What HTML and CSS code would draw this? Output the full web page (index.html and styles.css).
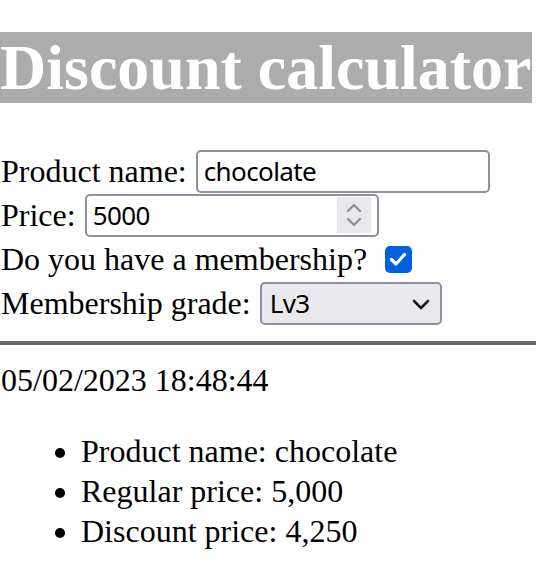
FILE: index.html
```html
<!DOCTYPE html>
<html lang="en">
<head>
<meta charset="utf-8">
<title>Discount calculator</title>
<link rel="stylesheet" href="styles.css">
</head>
<body>
<h1 class="title"><span class="title-text">Discount calculator</span></h1>
<form class="form">
  <div class="row">
    <label class="label" for="name">Product name:</label>
    <input class="text-input" id="name" type="text" value="chocolate">
  </div>
  <div class="row">
    <label class="label" for="price">Price:</label>
    <span class="number-field">
      <input class="number-input" id="price" type="text" value="5000">
      <span class="spin">
        <svg width="22" height="34" viewBox="0 0 22 34" aria-hidden="true">
          <path d="M5 13 L11 7 L17 13" fill="none" stroke="#8f8f9d" stroke-width="2.4" stroke-linecap="round" stroke-linejoin="round"/>
          <path d="M5 21 L11 27 L17 21" fill="none" stroke="#8f8f9d" stroke-width="2.4" stroke-linecap="round" stroke-linejoin="round"/>
        </svg>
      </span>
    </span>
  </div>
  <div class="row">
    <label class="label" for="member">Do you have a membership?</label>
    <span class="checkbox" id="member" role="checkbox" aria-checked="true">
      <svg width="26" height="26" viewBox="0 0 26 26" aria-hidden="true">
        <path d="M6.5 13.5 L11 18 L19.5 8.5" fill="none" stroke="#fff" stroke-width="3.2" stroke-linecap="round" stroke-linejoin="round"/>
      </svg>
    </span>
  </div>
  <div class="row">
    <label class="label" for="grade">Membership grade:</label>
    <span class="select-wrap">
      <select class="select" id="grade">
        <option>Lv1</option>
        <option>Lv2</option>
        <option selected>Lv3</option>
      </select>
      <svg class="chevron" width="20" height="14" viewBox="0 0 20 14" aria-hidden="true">
        <path d="M3 4 L10 11 L17 4" fill="none" stroke="#1a1a1a" stroke-width="2.6" stroke-linecap="round" stroke-linejoin="round"/>
      </svg>
    </span>
  </div>
</form>
<hr class="divider">
<p class="date">05/02/2023 18:48:44</p>
<ul class="result">
  <li>Product name: chocolate</li>
  <li>Regular price: 5,000</li>
  <li>Discount price: 4,250</li>
</ul>
</body>
</html>
```

FILE: styles.css
```css
html, body {
  margin: 0;
  padding: 0;
  background: #fff;
}

body {
  font-family: "Liberation Serif", "Times New Roman", serif;
  font-size: 32px;
  color: #000;
}

.title {
  margin: 32px 0 46px;
  font-size: 64px;
  font-weight: bold;
  line-height: 71px;
  height: 71px;
}

.title-text {
  background: #acacac;
  color: #fff;
}

.form {
  margin: 0;
  padding-left: 1px;
}

.row {
  display: flex;
  align-items: center;
  height: 44px;
  white-space: pre;
}

.label {
  margin-right: 9px;
}

.text-input,
.number-field,
.select {
  box-sizing: border-box;
  height: 43px;
  border: 2px solid #8f8f9d;
  border-radius: 5px;
  font-family: "Noto Sans", "Open Sans", sans-serif;
  font-size: 26px;
  letter-spacing: -0.6px;
  color: #000;
}

.text-input {
  width: 294px;
  padding: 0 6px;
  outline: none;
  background: #fff;
}

.number-field {
  display: inline-flex;
  align-items: center;
  width: 294px;
  padding: 0 6px 0 0;
  background: #fff;
}

.number-input {
  flex: 1;
  min-width: 0;
  border: none;
  outline: none;
  padding: 0 6px;
  font: inherit;
  letter-spacing: inherit;
  background: transparent;
}

.spin {
  display: flex;
  align-items: center;
  justify-content: center;
  width: 34px;
  height: 36px;
  background: #e9e9ed;
}

.checkbox {
  display: inline-flex;
  width: 27px;
  height: 27px;
  margin-left: 9px;
  border-radius: 5px;
  background: #0060df;
}

.select-wrap {
  position: relative;
  display: inline-flex;
}

.select {
  appearance: none;
  -webkit-appearance: none;
  width: 182px;
  padding: 0 8px;
  background: #e9e9ed;
  outline: none;
}

.chevron {
  position: absolute;
  right: 11px;
  top: 15px;
  pointer-events: none;
}

.divider {
  margin: 16px 0 0;
  border: none;
  border-top: 4px solid #696969;
  height: 0;
}

.date {
  margin: 17px 0 0;
  padding-left: 1px;
  line-height: 37px;
}

.result {
  margin: 32px 0 0;
  padding-left: 81px;
}

.result li {
  line-height: 40px;
}
```
